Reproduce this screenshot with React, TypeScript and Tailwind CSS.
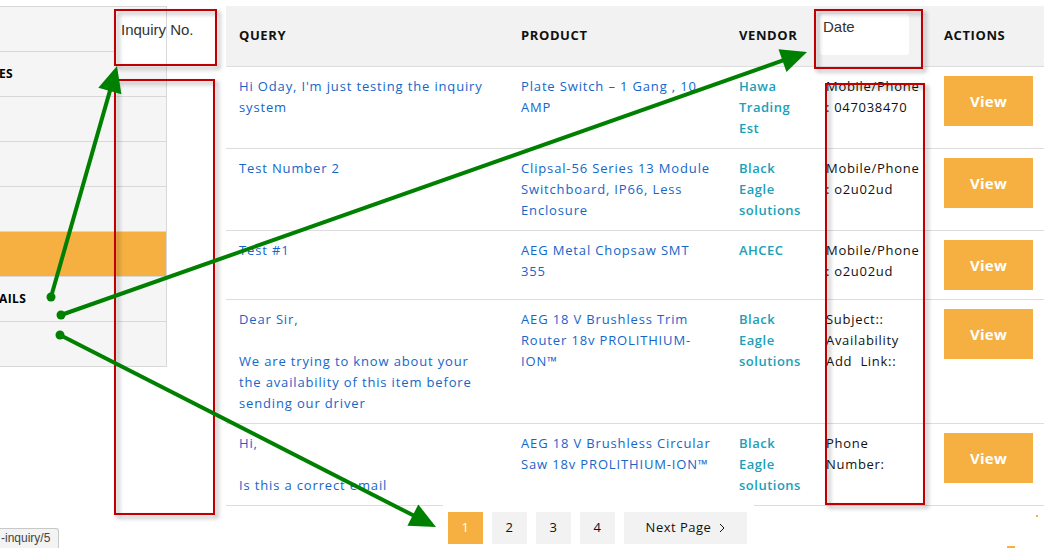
import React from "react";

type Row = {
  query: string[];
  product: string[];
  vendor: string[];
  info: string[];
};

const rows: Row[] = [
  {
    query: ["Hi Oday, I'm just testing the inquiry", "system"],
    product: ["Plate Switch – 1 Gang , 10", "AMP"],
    vendor: ["Hawa", "Trading", "Est"],
    info: ["Mobile/Phone", ": 047038470"],
  },
  {
    query: ["Test Number 2"],
    product: ["Clipsal-56 Series 13 Module", "Switchboard, IP66, Less", "Enclosure"],
    vendor: ["Black", "Eagle", "solutions"],
    info: ["Mobile/Phone", ": o2u02ud"],
  },
  {
    query: ["Test #1"],
    product: ["AEG Metal Chopsaw SMT", "355"],
    vendor: ["AHCEC"],
    info: ["Mobile/Phone", ": o2u02ud"],
  },
  {
    query: [
      "Dear Sir,",
      "",
      "We are trying to know about your",
      "the availability of this item before",
      "sending our driver",
    ],
    product: ["AEG 18 V Brushless Trim", "Router 18v PROLITHIUM-", "ION™"],
    vendor: ["Black", "Eagle", "solutions"],
    info: ["Subject::", "Availability", "Add  Link::"],
  },
  {
    query: ["Hi,", "", "Is this a correct email"],
    product: ["AEG 18 V Brushless Circular", "Saw 18v PROLITHIUM-ION™"],
    vendor: ["Black", "Eagle", "solutions"],
    info: ["Phone", "Number:"],
  },
];

function Lines({ lines }: { lines: string[] }) {
  return (
    <>
      {lines.map((l, i) => (
        <div key={i} className="h-[21px] whitespace-pre">
          {l === "" ? "\u00a0" : l}
        </div>
      ))}
    </>
  );
}

function Arrow({ x1, y1, x2, y2 }: { x1: number; y1: number; x2: number; y2: number }) {
  const dx = x2 - x1;
  const dy = y2 - y1;
  const len = Math.sqrt(dx * dx + dy * dy);
  const ux = dx / len;
  const uy = dy / len;
  const hl = 26;
  const hw = 12;
  const bx = x2 - ux * hl;
  const by = y2 - uy * hl;
  const px = -uy * hw;
  const py = ux * hw;
  return (
    <g>
      <circle cx={x1} cy={y1} r={4.5} fill="#008000" />
      <line x1={x1} y1={y1} x2={bx + ux * 2} y2={by + uy * 2} stroke="#008000" strokeWidth={4} />
      <polygon
        points={`${x2},${y2} ${bx + px},${by + py} ${bx - px},${by - py}`}
        fill="#008000"
      />
    </g>
  );
}

const sidebarItems = ["", "ES", "", "", "", "", "AILS", ""];

export default function App() {
  return (
    <div className="relative w-[1047px] h-[548px] overflow-hidden bg-white font-['Open_Sans',sans-serif]">
      <div className="flex pt-[6px]">
        {/* Sidebar */}
        <aside className="w-[167px] shrink-0 bg-[#f5f5f5] border-t border-r border-[#d8d8d8] self-start">
          {sidebarItems.map((t, i) => (
            <div
              key={i}
              className={`h-[45px] border-b border-[#d8d8d8] flex items-center text-[12px] font-bold text-black uppercase tracking-[0.4px] -ml-[1px] ${
                i === 5 ? "bg-[#f6b042]" : ""
              }`}
            >
              {t}
            </div>
          ))}
        </aside>

        {/* Main table */}
        <div className="ml-[59px] w-[818px] shrink-0">
          <div className="grid grid-cols-[282px_218px_87px_118px_113px] h-[61px] bg-[#f2f2f2] border-b border-[#dddddd] items-center text-[13px] font-bold text-[#111] uppercase tracking-[0.6px]">
            <div className="px-[13px]">Query</div>
            <div className="px-[13px]">Product</div>
            <div className="px-[13px]">Vendor</div>
            <div className="px-[13px]"></div>
            <div className="px-[13px]">Actions</div>
          </div>
          {rows.map((r, i) => (
            <div
              key={i}
              className="grid grid-cols-[282px_218px_87px_118px_113px] border-b border-[#dddddd] py-[9px] text-[13px] leading-[21px]"
            >
              <div className="px-[13px] text-[#1466c9] tracking-[0.85px]">
                <Lines lines={r.query} />
              </div>
              <div className="px-[13px] text-[#1466c9] tracking-[0.85px]">
                <Lines lines={r.product} />
              </div>
              <div className="px-[13px] text-[#1aa0b9] font-semibold tracking-[0.5px]">
                <Lines lines={r.vendor} />
              </div>
              <div className="px-[13px] text-[#111] tracking-[0.7px]">
                <Lines lines={r.info} />
              </div>
              <div className="px-[13px]">
                <button className="w-[89px] h-[50px] bg-[#f6b042] text-white font-bold text-[15px] tracking-[0.3px] flex items-center justify-center">
                  View
                </button>
              </div>
            </div>
          ))}
          {/* Pagination */}
          <div className="ml-[217px] -mt-[1px] w-[311px] bg-white pl-[5px] pt-[7px] pb-[4px] flex gap-[9px] text-[13px] text-[#111] tracking-[0.5px]">
            <div className="w-[35px] h-[32px] bg-[#f6b042] text-white flex items-center justify-center">1</div>
            <div className="w-[35px] h-[32px] bg-[#f2f2f2] flex items-center justify-center">2</div>
            <div className="w-[35px] h-[32px] bg-[#f2f2f2] flex items-center justify-center">3</div>
            <div className="w-[35px] h-[32px] bg-[#f2f2f2] flex items-center justify-center">4</div>
            <div className="w-[123px] h-[32px] bg-[#f2f2f2] flex items-center justify-center gap-[8px]">
              <span>Next Page</span>
              <svg width="6" height="10" viewBox="0 0 6 10" fill="none">
                <path d="M1 1l4 4-4 4" stroke="#111" strokeWidth="1" />
              </svg>
            </div>
          </div>
        </div>
      </div>

      {/* Annotation overlay */}
      <svg className="absolute inset-0 pointer-events-none" width="1047" height="548" viewBox="0 0 1047 548">
        <defs>
          <filter id="sh" x="-20%" y="-20%" width="140%" height="140%">
            <feDropShadow dx="3" dy="3" stdDeviation="2" floodColor="#000" floodOpacity="0.35" />
          </filter>
        </defs>
        <polygon points="1043,60 1047,56 1047,64" fill="#ffffff" />
        {/* box 1 white fill */}
        <rect x="115" y="10" width="101" height="55" fill="#ffffff" />
        <line x1="166.5" y1="10" x2="166.5" y2="65" stroke="#d8d8d8" strokeWidth="1" />
        {/* date header patch */}
        <rect x="820" y="14" width="89" height="41" rx="3" fill="#ffffff" />
        <g filter="url(#sh)" fill="none" stroke="#c00000" strokeWidth="2">
          <rect x="115" y="10" width="101" height="55" />
          <rect x="115" y="80" width="99" height="434" />
          <rect x="815" y="10" width="107" height="58" />
          <rect x="826" y="84" width="98" height="420" />
        </g>
        <Arrow x1={51} y1={297} x2={117} y2={66} />
        <Arrow x1={61} y1={315} x2={807} y2={52} />
        <Arrow x1={60} y1={335} x2={436} y2={527} />
      </svg>

      <div className="absolute left-[121px] top-[21px] leading-[17px] text-[15px] text-[#333] font-['Liberation_Sans',Arial,sans-serif]">
        Inquiry No.
      </div>
      <div className="absolute left-[823px] top-[18px] leading-[17px] text-[15px] text-[#333] font-['Liberation_Sans',Arial,sans-serif]">
        Date
      </div>

      <div className="absolute left-[1036px] top-[515px] w-[2px] h-[2px] bg-[#f6b042]" />
      <div className="absolute left-[1007px] top-[546px] w-[8px] h-[2px] bg-[#f6b042]" />

      {/* browser status bar */}
      <div className="absolute left-0 bottom-0 h-[20px] w-[59px] bg-[#f3f3f3] border-t border-r border-[#c8c8c8] rounded-tr-[3px] text-[12px] leading-[19px] text-[#444] pl-[1px] font-['Liberation_Sans',Arial,sans-serif] whitespace-nowrap overflow-hidden">
        -inquiry/5
      </div>
    </div>
  );
}
